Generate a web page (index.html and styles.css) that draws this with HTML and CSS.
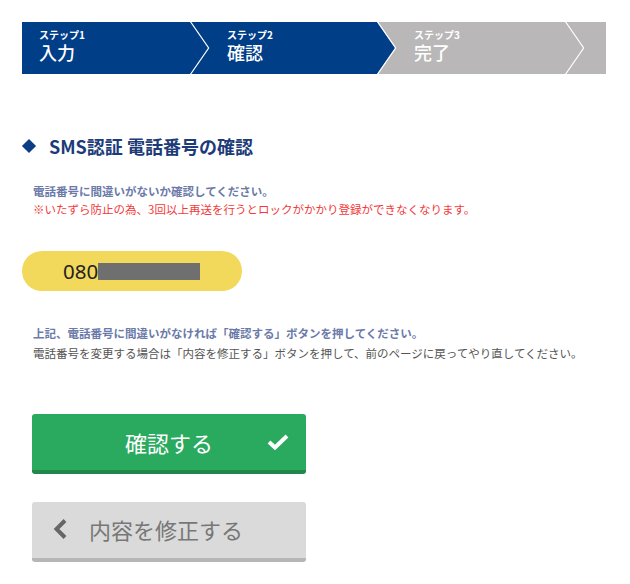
FILE: index.html
```html
<html>
<head>
<title>SMS認証 電話番号の確認</title>
<link rel="stylesheet" href="styles.css">
</head>
<body>

    <ol class="steps">
        <li class="step blue">
            <span class="step-label">ステップ1</span>
            <span class="step-name">入力</span>
        </li>
        <li class="step blue">
            <span class="step-label">ステップ2</span>
            <span class="step-name">確認</span>
        </li>
        <li class="step">
            <span class="step-label">ステップ3</span>
            <span class="step-name">完了</span>
        </li>
    </ol>

    <div class="content">
        <h2 class="title"><span class="diamond"></span>SMS認証 電話番号の確認</h2>

        <div class="notes">
            <p class="note">電話番号に間違いがないか確認してください。</p>
            <p class="warn">※いたずら防止の為、3回以上再送を行うとロックがかかり登録ができなくなります。</p>
        </div>

        <div class="phone">
            <span class="phone-num">080</span><span class="masked"></span>
        </div>

        <div class="notes guide">
            <p class="note">上記、電話番号に間違いがなければ「確認する」ボタンを押してください。</p>
            <p class="plain">電話番号を変更する場合は「内容を修正する」ボタンを押して、前のページに戻ってやり直してください。</p>
        </div>

        <button class="btn btn-ok">
            <span class="btn-text">確認する</span>
            <svg class="check" width="22" height="16" viewBox="0 0 22 16"><polyline points="2,8 8,13.5 20,2" fill="none" stroke="#fff" stroke-width="4"/></svg>
        </button>

        <button class="btn btn-back">
            <svg class="back" width="16" height="22" viewBox="0 0 16 22"><polyline points="13,2.5 4.5,11 13,19.5" fill="none" stroke="#666" stroke-width="4"/></svg>
            <span class="btn-text">内容を修正する</span>
        </button>
    </div>

</body>
</html>
```

FILE: styles.css
```css
body {
    margin: 0;
    font-family: "Noto Sans CJK JP", "Noto Sans", sans-serif;
    background: #fff;
}

/* step bar */
.steps {
    display: flex;
    list-style: none;
    margin: 22px 0 0 22px;
    padding: 0;
    width: 584px;
    height: 52px;
    background: #b9b7b8;
}

.step {
    position: relative;
    display: flex;
    flex-direction: column;
    justify-content: center;
    box-sizing: border-box;
    padding-left: 37px;
    padding-bottom: 5px;
    color: #fff;
}

.step:nth-child(1) {
    width: 168px;
    padding-left: 17px;
}

.step:nth-child(2) {
    width: 187px;
}

.step:nth-child(3) {
    width: 188px;
}

.step.blue {
    background: #003e88;
}

/* arrow tip */
.step::after {
    content: "";
    position: absolute;
    top: 0;
    left: 100%;
    width: 19px;
    height: 52px;
    background: inherit;
    clip-path: polygon(0 0, 18px 50%, 0 100%);
    z-index: 1;
}

/* white line along the tip */
.step::before {
    content: "";
    position: absolute;
    top: 0;
    left: 100%;
    width: 20px;
    height: 52px;
    background: #fff;
    clip-path: polygon(0 0, 1.4px 0, 19.4px 50%, 1.4px 100%, 0 100%, 18px 50%);
    z-index: 2;
}

.step-label {
    font-size: 10px;
    font-weight: bold;
    line-height: 12px;
}

.step-name {
    font-size: 18px;
    font-weight: 500;
    line-height: 22px;
}

/* content */
.content {
    padding: 0 22px;
}

.title {
    display: flex;
    align-items: center;
    margin: 60px 0 0;
    font-size: 18px;
    line-height: 24px;
    font-weight: bold;
    color: #1c3b78;
}

.diamond {
    width: 10px;
    height: 10px;
    margin: 0 15px 0 2px;
    background: #0c3d86;
    transform: rotate(45deg);
}

.notes {
    margin: 24px 0 0 11px;
    font-size: 11.5px;
    line-height: 18px;
}

.notes p {
    margin: 0;
}

.note {
    font-weight: bold;
    color: #6b7aa9;
}

.warn {
    color: #f23a3a;
}

.plain {
    color: #555;
}

.guide {
    margin-top: 32px;
    line-height: 20px;
}

.phone {
    display: flex;
    align-items: center;
    margin-top: 33px;
    width: 220px;
    height: 40px;
    box-sizing: border-box;
    padding-left: 41px;
    border-radius: 20px;
    background: #f2d95b;
}

.phone-num {
    font-family: "Noto Sans", sans-serif;
    font-size: 20.5px;
    color: #222;
}

.masked {
    display: inline-block;
    width: 102px;
    height: 17px;
    margin-top: 1px;
    background: #6f6f6f;
}

/* buttons */
.btn {
    display: flex;
    align-items: center;
    width: 274px;
    height: 60px;
    margin-left: 10px;
    padding: 0;
    border: none;
    border-radius: 3px;
    box-sizing: border-box;
    font-family: inherit;
    font-size: 22px;
}

.btn-ok {
    position: relative;
    justify-content: center;
    margin-top: 51px;
    background: #2aaa5f;
    border-bottom: 4px solid #22874b;
    color: #fff;
}

.check {
    position: absolute;
    right: 17px;
    top: 20px;
}

.btn-back {
    margin-top: 28px;
    padding-left: 20px;
    padding-bottom: 3px;
    background: #dadada;
    border-bottom: 4px solid #b6b6b6;
    color: #777;
}

.back {
    margin-right: 21px;
}
```
